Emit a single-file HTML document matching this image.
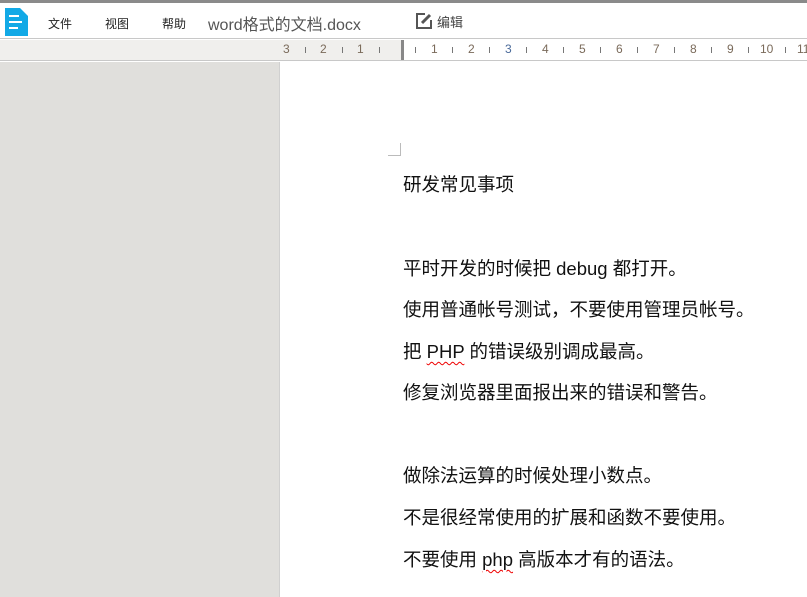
<!DOCTYPE html>
<html><head><meta charset="utf-8"><style>
*{margin:0;padding:0;box-sizing:border-box}
body{width:807px;height:597px;overflow:hidden;background:#fff;font-family:"Liberation Sans","Noto Sans CJK SC",sans-serif;position:relative}
.top{position:absolute;left:0;top:0;width:807px;height:3px;background:#8a8a8a}
.bar{position:absolute;top:3px;left:0;width:807px;height:36px;background:#fff;border-bottom:1px solid #c8c8c8}
.t{position:absolute;font-size:12px;color:#222;top:12px}
.ruler{position:absolute;top:40px;left:0;width:807px;height:21px;background:#f0efed;border-bottom:1px solid #c8c8c8}
.rw{position:absolute;left:401px;top:0;width:406px;height:20px;background:#fff;border-left:3px solid #888}
.n{position:absolute;top:2px;font-size:12px;color:#7a6a5a}
.k{position:absolute;top:7px;width:1px;height:6px;background:#777}
.side{position:absolute;left:0;top:62px;width:280px;height:535px;background:#e0dfdc;border-right:1px solid #d0d0d0}
.p{position:absolute;left:403px;font-size:18.5px;color:#111;white-space:nowrap;line-height:22px}
.sq{text-decoration:underline wavy #e00;text-decoration-thickness:1px;text-underline-offset:3px}
</style></head><body>
<div class="top"></div>
<div class="bar">
<svg style="position:absolute;left:5px;top:5px" width="23" height="28" viewBox="0 0 23 28"><path d="M0 0H15L23 8V28H0Z" fill="#12a9e6"/><rect x="4" y="7" width="10" height="2" fill="#fff"/><rect x="4" y="13" width="13" height="2" fill="#fff"/><rect x="4" y="19" width="9" height="2" fill="#fff"/></svg>
<div class="t" style="left:48px">文件</div>
<div class="t" style="left:105px">视图</div>
<div class="t" style="left:162px">帮助</div>
<div class="t" style="left:208px;top:8px;font-size:16px;color:#555">word格式的文档.docx</div>
<svg style="position:absolute;left:415px;top:9px" width="18" height="18" viewBox="0 0 18 18"><path d="M10 2H2V16H16V8" fill="none" stroke="#555" stroke-width="2"/><path d="M7 11L15 3" stroke="#555" stroke-width="3"/></svg>
<div class="t" style="left:437px;top:9px;font-size:13px;color:#444">编辑</div>
</div>
<div class="ruler"><div class="rw"></div>
<div class="n" style="left:283px">3</div><div class="k" style="left:305px"></div>
<div class="n" style="left:320px">2</div><div class="k" style="left:342px"></div>
<div class="n" style="left:357px">1</div><div class="k" style="left:379px"></div>
<div class="k" style="left:415px"></div><div class="n" style="left:431px">1</div>
<div class="k" style="left:452px"></div><div class="n" style="left:468px">2</div>
<div class="k" style="left:489px"></div><div class="n" style="left:505px;color:#4a6a9a">3</div>
<div class="k" style="left:526px"></div><div class="n" style="left:542px">4</div>
<div class="k" style="left:563px"></div><div class="n" style="left:579px">5</div>
<div class="k" style="left:600px"></div><div class="n" style="left:616px">6</div>
<div class="k" style="left:637px"></div><div class="n" style="left:653px">7</div>
<div class="k" style="left:674px"></div><div class="n" style="left:690px">8</div>
<div class="k" style="left:711px"></div><div class="n" style="left:727px">9</div>
<div class="k" style="left:748px"></div><div class="n" style="left:760px">10</div>
<div class="k" style="left:785px"></div><div class="n" style="left:797px">11</div>
</div>
<div class="side"></div>
<div style="position:absolute;left:388px;top:143px;width:13px;height:13px;border-right:1px solid #bbb;border-bottom:1px solid #bbb"></div>
<div class="p" style="top:174px">研发常见事项</div>
<div class="p" style="top:258px">平时开发的时候把 debug 都打开。</div>
<div class="p" style="top:299px">使用普通帐号测试，不要使用管理员帐号。</div>
<div class="p" style="top:341px">把 <span class="sq">PHP</span> 的错误级别调成最高。</div>
<div class="p" style="top:382px">修复浏览器里面报出来的错误和警告。</div>
<div class="p" style="top:465px">做除法运算的时候处理小数点。</div>
<div class="p" style="top:507px">不是很经常使用的扩展和函数不要使用。</div>
<div class="p" style="top:549px">不要使用 <span class="sq">php</span> 高版本才有的语法。</div>
</body></html>
